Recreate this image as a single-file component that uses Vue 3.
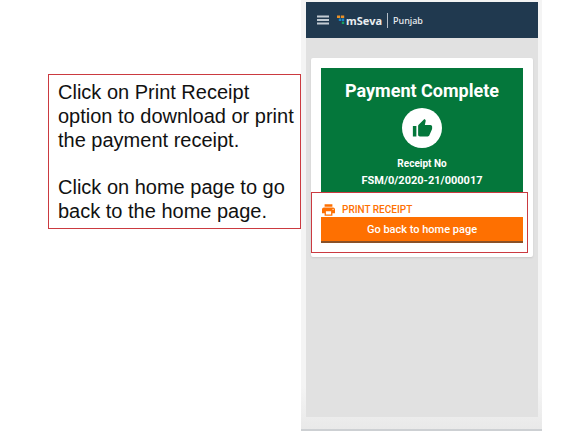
<script setup>
const instructions = [
  'Click on Print Receipt option to download or print the payment receipt.',
  'Click on home page to go back to the home page.',
]
const receiptNo = 'FSM/0/2020-21/000017'
const printReceipt = () => window.print()
</script>

<template>
  <main class="page">
    <section class="note">
      <p v-for="line in instructions" :key="line">{{ line }}</p>
    </section>

    <section class="phone">
      <div class="screen">
        <header class="bar">
          <button class="menu" type="button" aria-label="Menu">
            <svg viewBox="0 0 12 10" width="12" height="10">
              <path d="M0 1.5h12M0 5h12M0 8.5h12" stroke="#c3ccd3" stroke-width="2" />
            </svg>
          </button>
          <svg class="mark" viewBox="0 0 8 10" width="8" height="10">
            <path d="M0 0.5h3.2v2.6H0z M4 0.5h3.2v2.6H4z" fill="#e8912a" />
            <path d="M1.8 3.6h2.4v2.4H1.8z M4.8 3.6h2.4v2.4H4.8z" fill="#1686c9" />
            <path d="M4.8 6.6h2.4v2.4H4.8z" fill="#17a062" />
          </svg>
          <span class="brand">mSeva</span>
          <span class="region">Punjab</span>
        </header>

        <div class="content">
          <article class="card">
            <div class="banner">
              <h1>Payment Complete</h1>
              <span class="thumb">
                <svg viewBox="0 0 24 24" width="21" height="21">
                  <path
                    fill="#04773b"
                    d="M1 21h4V9H1v12zm22-11c0-1.1-.9-2-2-2h-6.31l.95-4.57.03-.32c0-.41-.17-.79-.44-1.06L14.17 1 7.59 7.59C7.22 7.95 7 8.45 7 9v10c0 1.1.9 2 2 2h9c.83 0 1.54-.5 1.84-1.22l3.02-7.05c.09-.23.14-.47.14-.73v-2z"
                  />
                </svg>
              </span>
              <p class="label">Receipt No</p>
              <p class="number">{{ receiptNo }}</p>
            </div>
            <div class="actions">
              <button class="print" type="button" @click="printReceipt">
                <svg viewBox="2 3 20 18" width="13" height="12">
                  <path
                    fill="#fe7001"
                    d="M19 8H5c-1.66 0-3 1.34-3 3v6h4v4h12v-4h4v-6c0-1.66-1.34-3-3-3zm-3 11H8v-5h8v5zm3-7c-.55 0-1-.45-1-1s.45-1 1-1 1 .45 1 1-.45 1-1 1zm-1-9H6v4h12V3z"
                  />
                </svg>
                <span>PRINT RECEIPT</span>
              </button>
              <button class="home" type="button">Go back to home page</button>
            </div>
          </article>
        </div>
      </div>
    </section>
  </main>
</template>

<style>
body {
  margin: 0;
  background: #fff;
}
</style>

<style scoped>
.page {
  display: grid;
  grid-template-columns: minmax(0, 253fr) minmax(0, 241fr);
  align-items: start;
  padding: 0 33px 0 48px;
  font-family: Roboto, "Liberation Sans", sans-serif;
}

p,
h1 {
  margin: 0;
}

button {
  margin: 0;
  padding: 0;
  border: 0;
  background: none;
  font-family: inherit;
  cursor: pointer;
}

svg {
  display: block;
}

.note {
  display: grid;
  gap: 23px;
  margin-top: 74px;
  padding: 5px 4px 5px 9px;
  border: 1px solid #cb3a40;
  color: #111;
  font-family: "Liberation Sans", Arial, sans-serif;
  font-size: 20px;
  line-height: 24px;
}

.phone {
  padding: 2px 4px 12px 5px;
  border-bottom: 2px solid #cdd0d3;
  background: linear-gradient(#f4f4f4 90%, #e9e9e9);
}

.screen {
  background: #e1e1e1;
}

.bar {
  display: flex;
  align-items: center;
  height: 36px;
  padding: 0 11px;
  background: #20394f;
  color: #e9edf0;
}

.mark {
  margin: 0 1px 0 8px;
}

.brand {
  padding-right: 5px;
  border-right: 1px solid #b5bec7;
  font-family: "Noto Sans", sans-serif;
  font-size: 11px;
  font-weight: 700;
  line-height: 15px;
}

.region {
  padding-left: 5px;
  font-family: "Noto Sans", sans-serif;
  font-size: 9px;
  font-weight: 500;
  line-height: 15px;
}

.content {
  padding: 20px 5px 160px;
}

.card {
  padding: 10px 10px 4px;
  border-radius: 2px;
  background: #fff;
  box-shadow: 0 1px 2px rgba(0, 0, 0, 0.1);
}

.banner {
  display: flex;
  flex-direction: column;
  align-items: center;
  padding: 11px 0 3px;
  background: #04773b;
  color: #fff;
  font-weight: 700;
}

h1 {
  font-size: 18px;
  line-height: 24px;
}

.thumb {
  display: grid;
  place-items: center;
  width: 40px;
  height: 40px;
  margin: 5px 0 8px;
  border-radius: 50%;
  background: #fff;
}

.label {
  font-size: 10px;
  line-height: 16px;
}

.number {
  font-size: 11px;
  line-height: 17px;
}

.actions {
  display: grid;
  margin: 0 -5px 0 -10px;
  padding: 10px 4px 9px 9px;
  border: 1px solid #cb3a40;
}

.print {
  display: flex;
  align-items: center;
  gap: 7px;
  height: 14px;
  padding-left: 1px;
  color: #fe7001;
  font-size: 10px;
  font-weight: 500;
  line-height: 14px;
}

.home {
  height: 26px;
  border-bottom: 2px solid #8a5127;
  background: #fe7001;
  color: #fff;
  font-size: 11px;
  font-weight: 500;
}
</style>
